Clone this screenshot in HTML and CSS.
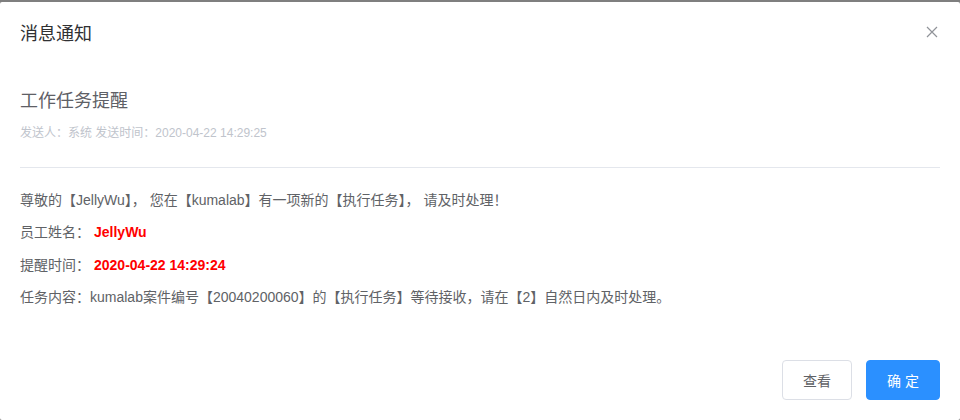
FILE: index.html
```html
<!DOCTYPE html>
<html lang="zh-CN">
  <head>
    <meta charset="UTF-8" />
    <meta name="viewport" content="width=device-width, initial-scale=1.0" />
    <title>消息通知</title>
    <link rel="stylesheet" href="styles.css">
  </head>

  <body>
    <div class="dialog">
      <div class="dialog-header">
        <span class="dialog-title">消息通知</span>
        <button class="dialog-close" type="button" aria-label="Close">
          <svg width="12" height="12" viewBox="0 0 12 12">
            <path d="M1 1 L11 11 M11 1 L1 11" stroke="#909399" stroke-width="1.2" fill="none"/>
          </svg>
        </button>
      </div>

      <div class="dialog-body">
        <div class="notice-title">工作任务提醒</div>
        <div class="notice-meta">发送人：系统 发送时间：2020-04-22 14:29:25</div>
        <hr class="divider"/>
        <div class="notice-content">
          <p>尊敬的【JellyWu】， 您在【kumalab】有一项新的【执行任务】， 请及时处理！</p>
          <p>员工姓名：<span class="highlight">JellyWu</span></p>
          <p>提醒时间：<span class="highlight">2020-04-22 14:29:24</span></p>
          <p>任务内容：kumalab案件编号【20040200060】的【执行任务】等待接收，请在【2】自然日内及时处理。</p>
        </div>
      </div>

      <div class="dialog-footer">
        <button class="btn" type="button">查看</button>
        <button class="btn btn-primary" type="button">确 定</button>
      </div>
    </div>
    <!-- dialog -->
  </body>
</html>
```

FILE: styles.css
```css
html, body {
  margin: 0;
  height: 100%;
}

body {
  background-color: #7f7f7f;
  font-family: "Liberation Sans", "Noto Sans CJK SC", sans-serif;
  color: #606266;
}

.dialog {
  box-sizing: border-box;
  margin-top: 2px;
  height: 418px;
  background-color: #fff;
  border-radius: 2px;
  display: flex;
  flex-direction: column;
}
.dialog-header {
  display: flex;
  justify-content: space-between;
  align-items: flex-start;
  padding: 20px 20px 10px;
}
.dialog-title {
  font-size: 18px;
  line-height: 24px;
  color: #303133;
}
.dialog-close {
  border: none;
  background: transparent;
  padding: 0;
  margin-top: 2px;
  width: 16px;
  height: 16px;
  display: flex;
  align-items: center;
  justify-content: center;
  cursor: pointer;
}

.dialog-body {
  padding: 30px 20px 0;
  font-size: 14px;
}
.notice-title {
  font-size: 18px;
  line-height: 30px;
  color: #5e6066;
}
.notice-meta {
  margin-top: 7px;
  font-size: 12px;
  line-height: 20px;
  color: #c0c4cc;
}
hr.divider {
  margin: 24px 0 16px;
  border: none;
  border-top: 1px solid #e4e7ed;
  height: 0;
}
.notice-content p {
  margin: 0;
  line-height: 32.4px;
}
.highlight {
  margin-left: 4px;
  color: #ff0000;
  font-weight: bold;
}

.dialog-footer {
  margin-top: auto;
  display: flex;
  justify-content: flex-end;
  gap: 14px;
  padding: 10px 20px 20px;
}
.btn {
  height: 40px;
  padding: 0 20px;
  font-family: inherit;
  font-size: 14px;
  color: #606266;
  background-color: #fff;
  border: 1px solid #dcdfe6;
  border-radius: 4px;
  cursor: pointer;
}
.btn-primary {
  color: #fff;
  background-color: #2b90ff;
  border-color: #2b90ff;
  min-width: 74px;
}
```
